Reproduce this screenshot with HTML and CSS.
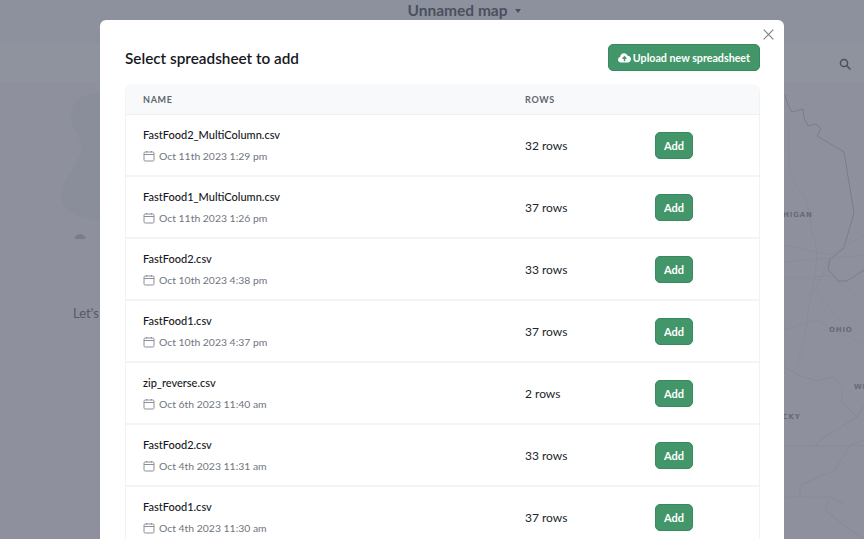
FILE: index.html
```html
<!DOCTYPE html>
<html lang="en">
<head>
    <meta charset="UTF-8">
    <meta name="viewport" content="width=device-width, initial-scale=1.0">
    <title>Select spreadsheet</title>
    <link rel="stylesheet" href="styles.css">
</head>
<body>
    <svg class="icon-defs" width="0" height="0">
        <symbol id="calendar" viewBox="0 0 12 12">
            <rect x="1" y="2" width="10" height="9" rx="1.2" fill="none" stroke="currentColor" stroke-width="1"/>
            <path d="M1 4.5h10M3.5 1v1.5M8.5 1v1.5" fill="none" stroke="currentColor" stroke-width="1"/>
        </symbol>
    </svg>

    <div class="app">
        <header class="app-header">
            <span class="map-title">Unnamed map</span>
            <span class="caret"></span>
        </header>
        <div class="toolbar">
            <svg class="search-icon" width="12" height="12" viewBox="0 0 12 12">
                <circle cx="5" cy="5" r="3.6" fill="none" stroke="currentColor" stroke-width="1.5"/>
                <path d="M7.8 7.8L11 11" stroke="currentColor" stroke-width="1.6" stroke-linecap="round"/>
            </svg>
        </div>
        <div class="map">
            <p class="empty-text">Let's get started by adding your data</p>
            <svg class="map-lines" width="864" height="539" viewBox="0 0 864 539">
                <path class="water" d="M100 93C82 92 71 102 71 116C71 130 82 136 81 150C80 164 61 176 61 196C61 214 84 220 100 220Z"/>
                <path class="island" d="M75 237C78 233 83 233 86 238L85 239H75Z"/>
                <path class="coast" d="M785 95L788 105L792 112L803 109L804 118L808 126L816 124L821 129L817 136L844 152L854 213L846 240L843 249L830 259L828 270L839 281L847 281L864 270"/>
                <path class="road" d="M788 115C790 160 786 180 800 190C812 200 808 230 815 240C820 260 812 290 808 310C806 340 800 350 798 365M784 245L830 255L864 235M784 262L864 255M784 278L830 276L864 300M830 258L815 290L840 320M784 330L815 320L864 345"/>
                <path class="state" d="M784 367L801 376L817 381L834 377L842 387L842 402L857 417L864 405M857 417L820 440L815 447M784 446H864M784 497H830L845 505M800 497L800 485L835 470L850 445L864 440M830 497L825 510L850 530L864 539"/>
                <path class="state dashed" d="M784 280H830M784 367V289"/>
                <text class="state-label" x="766" y="217">MICHIGAN</text>
                <text class="state-label" x="829" y="332">OHIO</text>
                <text class="state-label" x="854" y="389">WEST</text>
                <text class="state-label" x="752" y="419">KENTUCKY</text>
            </svg>
        </div>
    </div>

    <div class="overlay">
        <div class="modal">
            <svg class="close-icon" width="11" height="11" viewBox="0 0 11 11">
                <path d="M.7.7l9.6 9.6M10.3.7L.7 10.3" stroke="currentColor" stroke-width="1.2"/>
            </svg>
            <div class="modal-head">
                <h2>Select spreadsheet to add</h2>
                <button class="btn btn-upload">
                    <svg width="13" height="11" viewBox="0 0 14 11">
                        <path d="M3.2 10.8C1.4 10.8 0 9.5 0 7.8C0 6.4 1 5.2 2.3 4.9C2.4 2.7 4.2 1 6.5 1C8.2 1 9.7 2 10.3 3.5C12.4 3.5 14 5 14 7.1C14 9.2 12.4 10.8 10.4 10.8Z" fill="currentColor"/>
                        <path d="M7 9.6V5.2M5 6.8L7 4.7L9 6.8" fill="none" stroke="#43966a" stroke-width="1.5"/>
                    </svg>
                    Upload new spreadsheet
                </button>
            </div>
            <table class="sheet-table">
                <thead>
                    <tr>
                        <th class="col-name">Name</th>
                        <th class="col-rows">Rows</th>
                        <th></th>
                    </tr>
                </thead>
                <tbody>
                    <tr>
                        <td>
                            <div class="file-name">FastFood2_MultiColumn.csv</div>
                            <div class="file-date"><svg width="12" height="12"><use href="#calendar"/></svg>Oct 11th 2023 1:29 pm</div>
                        </td>
                        <td class="row-count">32 rows</td>
                        <td><button class="btn btn-add">Add</button></td>
                    </tr>
                    <tr>
                        <td>
                            <div class="file-name">FastFood1_MultiColumn.csv</div>
                            <div class="file-date"><svg width="12" height="12"><use href="#calendar"/></svg>Oct 11th 2023 1:26 pm</div>
                        </td>
                        <td class="row-count">37 rows</td>
                        <td><button class="btn btn-add">Add</button></td>
                    </tr>
                    <tr>
                        <td>
                            <div class="file-name">FastFood2.csv</div>
                            <div class="file-date"><svg width="12" height="12"><use href="#calendar"/></svg>Oct 10th 2023 4:38 pm</div>
                        </td>
                        <td class="row-count">33 rows</td>
                        <td><button class="btn btn-add">Add</button></td>
                    </tr>
                    <tr>
                        <td>
                            <div class="file-name">FastFood1.csv</div>
                            <div class="file-date"><svg width="12" height="12"><use href="#calendar"/></svg>Oct 10th 2023 4:37 pm</div>
                        </td>
                        <td class="row-count">37 rows</td>
                        <td><button class="btn btn-add">Add</button></td>
                    </tr>
                    <tr>
                        <td>
                            <div class="file-name">zip_reverse.csv</div>
                            <div class="file-date"><svg width="12" height="12"><use href="#calendar"/></svg>Oct 6th 2023 11:40 am</div>
                        </td>
                        <td class="row-count">2 rows</td>
                        <td><button class="btn btn-add">Add</button></td>
                    </tr>
                    <tr>
                        <td>
                            <div class="file-name">FastFood2.csv</div>
                            <div class="file-date"><svg width="12" height="12"><use href="#calendar"/></svg>Oct 4th 2023 11:31 am</div>
                        </td>
                        <td class="row-count">33 rows</td>
                        <td><button class="btn btn-add">Add</button></td>
                    </tr>
                    <tr>
                        <td>
                            <div class="file-name">FastFood1.csv</div>
                            <div class="file-date"><svg width="12" height="12"><use href="#calendar"/></svg>Oct 4th 2023 11:30 am</div>
                        </td>
                        <td class="row-count">37 rows</td>
                        <td><button class="btn btn-add">Add</button></td>
                    </tr>
                </tbody>
            </table>
        </div>
    </div>
</body>
</html>
```

FILE: styles.css
```css
html,
body {
    height: 100%;
}

body {
    font-family: Lato, "Liberation Sans", sans-serif;
    background-color: #fff;
    margin: 0;
    overflow: hidden;
}

.icon-defs {
    position: absolute;
}

/* page behind the modal */
.app {
    height: 100%;
    display: flex;
    flex-direction: column;
}

.app-header {
    height: 44px;
    flex-shrink: 0;
    padding: 0 0 0 64px;
    box-sizing: border-box;
    display: flex;
    justify-content: center;
    gap: 7px;
    background-color: #fbfbfc;
    color: #777880;
}

.map-title {
    font-size: 15.5px;
    font-weight: 700;
    line-height: 20px;
}

.caret {
    width: 0;
    height: 0;
    margin-top: 9px;
    border-left: 3.5px solid transparent;
    border-right: 3.5px solid transparent;
    border-top: 4px solid #777880;
}

.toolbar {
    height: 38px;
    flex-shrink: 0;
    box-sizing: border-box;
    display: flex;
    justify-content: flex-end;
    align-items: center;
    padding: 0 13px 0 0;
    background-color: #fff;
    color: #777880;
}

.search-icon {
    margin-top: 1px;
}

.map {
    flex: 1;
    background-color: #fcfbfd;
}

.empty-text {
    position: absolute;
    top: 305px;
    left: 73px;
    margin: 0;
    font-size: 13px;
    line-height: 16px;
    color: #8b8c93;
    white-space: nowrap;
}

.map-lines {
    position: absolute;
    top: 0;
    left: 0;
}

.map-lines path {
    fill: none;
}

.map-lines .water {
    fill: #f3f5f6;
}

.map-lines .island {
    fill: #cfd2d8;
}

.map-lines .coast {
    stroke: #d3d2d6;
    stroke-width: 1;
}

.map-lines .road {
    stroke: #f4efee;
    stroke-width: 1;
}

.map-lines .state {
    stroke: #efecef;
    stroke-width: 1;
}

.map-lines .dashed {
    stroke-dasharray: 2 2;
}

.state-label {
    font-family: "DejaVu Sans", sans-serif;
    font-size: 7px;
    font-weight: 700;
    letter-spacing: 0.8px;
    fill: #aeacb2;
}

/* modal */
.overlay {
    position: fixed;
    top: 0;
    right: 0;
    bottom: 0;
    left: 0;
    background-color: rgba(31, 39, 61, 0.5);
    overflow: hidden;
}

.modal {
    position: relative;
    width: 684px;
    margin: 20px 0 0 100px;
    padding: 24px 24px 0 25px;
    box-sizing: border-box;
    background-color: white;
    border-radius: 6px;
}

.close-icon {
    position: absolute;
    top: 9px;
    right: 10px;
    color: #7d828d;
}

.modal-head {
    display: flex;
    justify-content: space-between;
    align-items: center;
    margin-bottom: 13px;
}

.modal-head h2 {
    margin: 0;
    font-size: 15.3px;
    font-weight: 600;
    color: #16181d;
}

.btn {
    font-family: inherit;
    font-weight: 700;
    color: white;
    background-color: #43966a;
    border: 1px solid #38895e;
    border-radius: 5px;
    cursor: pointer;
}

.btn-upload {
    display: flex;
    align-items: center;
    gap: 2px;
    height: 27px;
    padding: 0 9px;
    font-size: 10.7px;
}

.btn-add {
    display: block;
    width: 38px;
    height: 27px;
    padding: 0;
    font-size: 11px;
}

/* table */
.sheet-table {
    width: 635px;
    table-layout: fixed;
    border-collapse: separate;
    border-spacing: 0;
    border: 1px solid #f1f2f4;
    border-top: 0;
    border-radius: 8px 8px 0 0;
}

.sheet-table th {
    height: 30px;
    padding: 0;
    font-size: 9px;
    font-weight: 700;
    letter-spacing: 0.7px;
    text-align: left;
    text-transform: uppercase;
    color: #5f6570;
    background-color: #f8f9fb;
    border-bottom: 1px solid #eef0f2;
}

.sheet-table th:first-child {
    border-top-left-radius: 8px;
}

.sheet-table th:last-child {
    border-top-right-radius: 8px;
}

.col-name {
    width: 382px;
    padding-left: 17px !important;
}

.col-rows {
    width: 130px;
}

.sheet-table td {
    height: 60px;
    padding: 0;
    border-bottom: 2px solid #f3f4f5;
}

.sheet-table td:first-child {
    padding-left: 17px;
}

.file-name {
    margin-top: 1px;
    font-size: 11px;
    font-weight: 500;
    line-height: 16px;
    color: #16181d;
}

.file-date {
    display: flex;
    align-items: center;
    gap: 4px;
    margin-top: 5px;
    font-size: 10.4px;
    line-height: 16px;
    color: #70747e;
}

.file-date svg {
    color: #8a8f9a;
}

.row-count {
    font-size: 12px;
    color: #22252b;
}
```
